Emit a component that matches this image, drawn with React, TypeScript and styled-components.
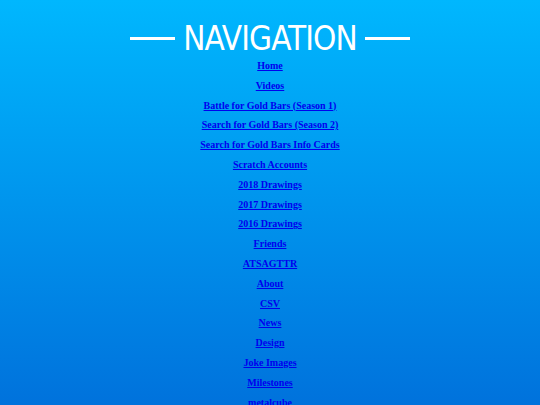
import React from "react";
import styled, { createGlobalStyle } from "styled-components";

const GlobalStyle = createGlobalStyle`
  html, body {
    margin: 0;
    padding: 0;
  }
  body {
    min-height: 405px;
    background: linear-gradient(to bottom, #00b7fe 0%, #0072dc 100%);
    background-attachment: fixed;
    font-family: "Liberation Serif", "Times New Roman", serif;
  }
`;

const Page = styled.div`
  display: flex;
  flex-direction: column;
  align-items: center;
  padding-top: 18px;
`;

const Heading = styled.h1`
  display: flex;
  align-items: center;
  gap: 8px;
  margin: 0;
  height: 40px;
  color: #fff;
  font-family: "DejaVu Sans Condensed", "Liberation Sans", sans-serif;
  font-stretch: condensed;
  font-weight: 400;
  font-size: 33px;
  letter-spacing: -0.9px;
`;

const Rule = styled.span`
  display: block;
  width: 45px;
  height: 3px;
  background: #fff;
`;

const NavList = styled.nav`
  display: flex;
  flex-direction: column;
  align-items: center;
  margin-top: -2px;
`;

const NavLink = styled.a`
  display: block;
  height: 19.8px;
  line-height: 19.8px;
  color: #0000ee;
  font-size: 10px;
  font-weight: 700;
  text-decoration: underline;
`;

const links = [
  "Home",
  "Videos",
  "Battle for Gold Bars (Season 1)",
  "Search for Gold Bars (Season 2)",
  "Search for Gold Bars Info Cards",
  "Scratch Accounts",
  "2018 Drawings",
  "2017 Drawings",
  "2016 Drawings",
  "Friends",
  "ATSAGTTR",
  "About",
  "CSV",
  "News",
  "Design",
  "Joke Images",
  "Milestones",
  "metalcube",
];

export default function App() {
  return (
    <>
      <GlobalStyle />
      <Page>
        <Heading>
          <Rule />
          NAVIGATION
          <Rule />
        </Heading>
        <NavList>
          {links.map((l) => (
            <NavLink key={l} href="#">
              {l}
            </NavLink>
          ))}
        </NavList>
      </Page>
    </>
  );
}
